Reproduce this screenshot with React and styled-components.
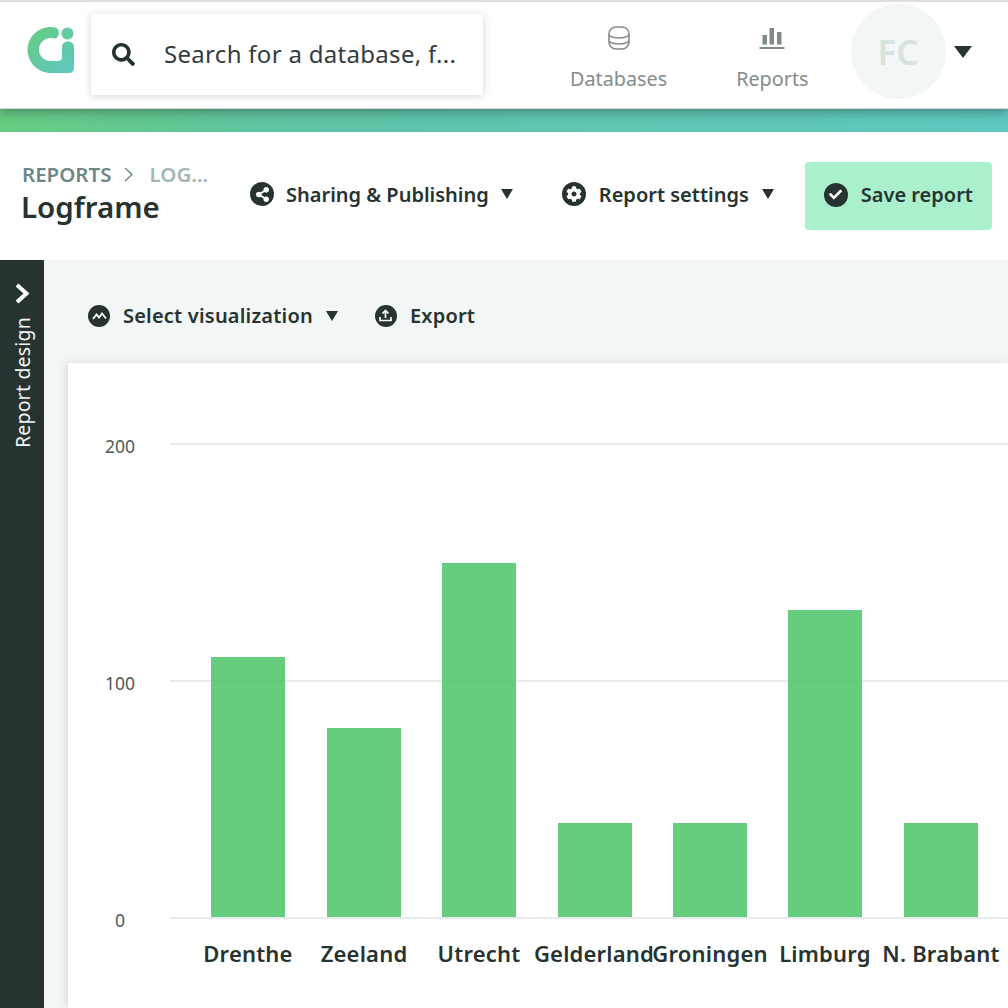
import React from 'react';
import styled, { createGlobalStyle } from 'styled-components';
import { FaCheck, FaCog, FaSearch, FaShareAlt } from 'react-icons/fa';

const GlobalStyle = createGlobalStyle`
  html, body {
    margin: 0;
    padding: 0;
    height: 100%;
    overflow: hidden;
    background: white;
    font-family: "Noto Sans", "Open Sans", sans-serif;
    color: #263331;
  }
`;

const Page = styled.div`
  width: 1008px;
  height: 1008px;
  display: flex;
  flex-direction: column;
  overflow: hidden;
`;

const TopNav = styled.header`
  position: relative;
  z-index: 2;
  height: 106px;
  flex-shrink: 0;
  border-top: 2px solid #dcdcdc;
  background: white;
  display: flex;
  align-items: flex-start;
  box-shadow: 0 1px 0 #d5d8d8, 0 4px 10px rgba(38, 51, 49, 0.45);
`;

const LogoSlot = styled.div`
  width: 91px;
  height: 100%;
  padding: 24px 0 0 27px;
  box-sizing: border-box;
  flex-shrink: 0;
`;

const SearchBox = styled.div`
  width: 392px;
  height: 81px;
  margin-top: 12px;
  flex-shrink: 0;
  display: flex;
  align-items: center;
  gap: 29px;
  padding-left: 21px;
  box-sizing: border-box;
  background: white;
  box-shadow: 0 1px 8px rgba(38, 51, 49, 0.2);
  font-size: 24px;
  letter-spacing: 0.3px;
  color: #323c42;
  white-space: nowrap;
  svg {
    color: #263331;
    font-size: 23px;
    flex-shrink: 0;
  }
  span {
    position: relative;
    top: -1px;
  }
`;

const NavLinks = styled.nav`
  display: flex;
  margin-left: 87px;
  gap: 69px;
`;

const NavLink = styled.a`
  display: flex;
  flex-direction: column;
  align-items: center;
  padding-top: 21px;
  font-size: 19.8px;
  line-height: 26px;
  color: #858b8b;
`;

const NavIcon = styled.span`
  height: 29px;
  margin-bottom: 14px;
  display: flex;
  align-items: center;
`;

const UserArea = styled.div`
  display: flex;
  align-items: center;
  margin-left: 42px;
  margin-top: 2px;
  gap: 8px;
`;

const Avatar = styled.div`
  width: 95px;
  height: 95px;
  border-radius: 50%;
  background: #f3f6f6;
  color: #d5e4dd;
  font-size: 35px;
  font-weight: 600;
  display: flex;
  align-items: center;
  justify-content: center;
`;

const Caret = styled.span`
  display: inline-block;
  flex-shrink: 0;
  border-left: ${(p) => p.$size}px solid transparent;
  border-right: ${(p) => p.$size}px solid transparent;
  border-top: ${(p) => p.$tall}px solid #263331;
`;

const BrandBar = styled.div`
  height: 24px;
  flex-shrink: 0;
  background: linear-gradient(90deg, #66cc80 0%, #5fc4a6 30%, #5fc8c0 100%);
`;

const ReportHeader = styled.div`
  height: 128px;
  flex-shrink: 0;
  display: flex;
  align-items: center;
  background: white;
`;

const TitleBlock = styled.div`
  width: 250px;
  padding-left: 21px;
  box-sizing: border-box;
  flex-shrink: 0;
  margin-top: -4px;
`;

const Breadcrumbs = styled.div`
  display: flex;
  align-items: center;
  gap: 13px;
  padding-left: 1px;
  font-size: 20.5px;
  line-height: 24px;
  font-weight: 600;
  color: #6f8886;
  white-space: nowrap;
  svg {
    flex-shrink: 0;
  }
`;

const CrumbCurrent = styled.span`
  margin-left: 3px;
  color: #a3b6b6;
`;

const Title = styled.h1`
  margin: 2px 0 0;
  font-size: 29.5px;
  line-height: 38px;
  font-weight: 600;
  color: #263331;
`;

const ActionButton = styled.button`
  display: flex;
  align-items: center;
  gap: ${(p) => p.$gap || 12}px;
  padding: 0;
  margin-top: -4px;
  margin-right: ${(p) => p.$after || 0}px;
  border: 0;
  background: none;
  font-family: inherit;
  font-size: 20px;
  letter-spacing: ${(p) => p.$track || 0}px;
  font-weight: 600;
  color: #263331;
  white-space: nowrap;
`;

const SaveButton = styled(ActionButton)`
  width: 187px;
  height: 68px;
  margin-top: 0;
  padding-bottom: 3px;
  justify-content: center;
  border-radius: 4px;
  background: #abf0cc;
`;

const IconDisc = styled.span`
  width: ${(p) => p.$d || 24}px;
  height: ${(p) => p.$d || 24}px;
  border-radius: 50%;
  background: #263331;
  color: white;
  display: flex;
  align-items: center;
  justify-content: center;
  font-size: ${(p) => p.$glyph || 13}px;
  flex-shrink: 0;
`;

const Workspace = styled.div`
  flex: 1;
  display: flex;
  min-height: 0;
`;

const DesignRail = styled.aside`
  width: 44px;
  flex-shrink: 0;
  background: #263331;
  color: white;
  display: flex;
  flex-direction: column;
  align-items: center;
  padding-top: 23px;
  gap: 13px;
`;

const RailLabel = styled.span`
  writing-mode: vertical-rl;
  transform: rotate(180deg);
  font-size: 19.5px;
  line-height: 24px;
  letter-spacing: 0.2px;
  white-space: nowrap;
  color: #f3f6f6;
  margin-left: 2px;
`;

const Content = styled.main`
  flex: 1;
  min-width: 0;
  background: #f3f6f6;
  padding-left: 24px;
  display: flex;
  flex-direction: column;
`;

const Toolbar = styled.div`
  height: 103px;
  flex-shrink: 0;
  padding: 12px 0 0 20px;
  box-sizing: border-box;
  display: flex;
  align-items: center;
`;

const ChartCard = styled.section`
  flex: 1;
  background: white;
  box-shadow: -2px 0 8px rgba(38, 51, 49, 0.15);
`;

const ChartSvg = styled.svg`
  display: block;
  width: 940px;
  height: 645px;
`;

const AxisText = styled.text`
  font-size: 17.5px;
  fill: #4d5958;
  text-anchor: middle;
`;

const CategoryText = styled.text`
  font-size: 22px;
  letter-spacing: 0.2px;
  font-weight: 600;
  fill: #263331;
  text-anchor: middle;
`;

const GridLine = styled.line`
  stroke: #e8ebeb;
  stroke-width: 2;
`;

const Bar = styled.rect`
  fill: #4fc46b;
  fill-opacity: 0.87;
`;

const bars = [
  { label: 'Drenthe', x: 143, top: 294, cx: 180 },
  { label: 'Zeeland', x: 259, top: 365, cx: 296 },
  { label: 'Utrecht', x: 374, top: 200, cx: 411 },
  { label: 'Gelderland', x: 490, top: 460, cx: 526 },
  { label: 'Groningen', x: 605, top: 460, cx: 642 },
  { label: 'Limburg', x: 720, top: 247, cx: 757 },
  { label: 'N. Brabant', x: 836, top: 460, cx: 873 },
];

const ticks = [
  { value: 200, y: 81 },
  { value: 100, y: 318 },
  { value: 0, y: 555 },
];

const Logo = () => (
  <svg width="48" height="48" viewBox="0 0 48 48">
    <defs>
      <linearGradient id="logoFill" x1="0" y1="0" x2="1" y2="1">
        <stop offset="0%" stopColor="#66cc80" />
        <stop offset="100%" stopColor="#5fc8c4" />
      </linearGradient>
    </defs>
    <path
      d="M24 1 C25.5 1 27 1.2 28.5 1.6 C33 3 33 11 28.5 12.6 C27 12.2 25.5 12 24 12 C17 12 12 17 12 24 C12 30 17 35 24 35 L31 35 C33.5 35 35 33 35 31 L35 21 C35 17.5 37.5 15.5 41 15.5 C44.5 15.5 47 17.5 47 21 L47 42 C47 45 45 47 42 47 L24 47 C11 47 0.5 36.5 0.5 24 C0.5 11 11 1 24 1 Z"
      fill="url(#logoFill)"
    />
    <circle cx="40.5" cy="7.5" r="6" fill="#64cba0" />
  </svg>
);

const DatabaseIcon = () => (
  <svg width="22" height="24" viewBox="0 0 22 24" fill="none" stroke="#858b8b" strokeWidth="1.6">
    <rect x="1" y="1" width="20" height="22" rx="7" />
    <path d="M1 9 C5 13 17 13 21 9" />
    <path d="M1 15 C5 19 17 19 21 15" />
  </svg>
);

const ReportsIcon = () => (
  <svg width="26" height="26" viewBox="0 0 26 26" fill="#7f8a89">
    <rect x="3.5" y="10" width="4.5" height="9.5" />
    <rect x="10.5" y="3" width="4.5" height="16.5" />
    <rect x="18" y="7" width="4.5" height="12.5" />
    <rect x="0.5" y="22" width="25" height="2" />
  </svg>
);

const Chevron = () => (
  <svg width="9" height="15" viewBox="0 0 9 15" fill="none" stroke="#6f8886" strokeWidth="1.5">
    <path d="M1 1 L8 7.5 L1 14" />
  </svg>
);

const RailChevron = () => (
  <svg width="15" height="21" viewBox="0 0 15 21" fill="none" stroke="white" strokeWidth="4">
    <path d="M2 2 L11.5 10.5 L2 19" />
  </svg>
);

const TrendIcon = () => (
  <svg width="15" height="10" viewBox="0 0 15 10" fill="none" stroke="white" strokeWidth="1.8">
    <path d="M1 8 L4.5 3.5 L7 6.5 L10 2.5 L14 7.5" />
  </svg>
);

const UploadIcon = () => (
  <svg width="13" height="13" viewBox="0 0 13 13" fill="none" stroke="white" strokeWidth="1.7">
    <path d="M6.5 9 L6.5 2 M3.5 4.5 L6.5 1.5 L9.5 4.5" />
    <path d="M1 8 L1 11.5 L12 11.5 L12 8" />
  </svg>
);

const App = () => (
  <Page>
    <GlobalStyle />
    <TopNav>
      <LogoSlot>
        <Logo />
      </LogoSlot>
      <SearchBox>
        <FaSearch />
        <span>Search for a database, f...</span>
      </SearchBox>
      <NavLinks>
        <NavLink>
          <NavIcon>
            <DatabaseIcon />
          </NavIcon>
          Databases
        </NavLink>
        <NavLink>
          <NavIcon>
            <ReportsIcon />
          </NavIcon>
          Reports
        </NavLink>
      </NavLinks>
      <UserArea>
        <Avatar>FC</Avatar>
        <Caret $size={9} $tall={12} />
      </UserArea>
    </TopNav>
    <BrandBar />
    <ReportHeader>
      <TitleBlock>
        <Breadcrumbs>
          <span>REPORTS</span>
          <Chevron />
          <CrumbCurrent>LOG...</CrumbCurrent>
        </Breadcrumbs>
        <Title>Logframe</Title>
      </TitleBlock>
      <ActionButton $after={49}>
        <IconDisc $glyph={15}>
          <FaShareAlt />
        </IconDisc>
        Sharing &amp; Publishing
        <Caret $size={6} $tall={10} />
      </ActionButton>
      <ActionButton $after={31} $gap={13}>
        <IconDisc $glyph={16}>
          <FaCog />
        </IconDisc>
        Report settings
        <Caret $size={6} $tall={10} />
      </ActionButton>
      <SaveButton $gap={13}>
        <IconDisc>
          <FaCheck />
        </IconDisc>
        Save report
      </SaveButton>
    </ReportHeader>
    <Workspace>
      <DesignRail>
        <RailChevron />
        <RailLabel>Report design</RailLabel>
      </DesignRail>
      <Content>
        <Toolbar>
          <ActionButton $after={37} $gap={13} $track={0.2}>
            <IconDisc $d={22}>
              <TrendIcon />
            </IconDisc>
            Select visualization
            <Caret $size={6} $tall={10} />
          </ActionButton>
          <ActionButton $gap={13} $track={0.2}>
            <IconDisc $d={22}>
              <UploadIcon />
            </IconDisc>
            Export
          </ActionButton>
        </Toolbar>
        <ChartCard>
          <ChartSvg viewBox="0 0 940 645">
            {ticks.map((t) => (
              <g key={t.value}>
                <GridLine x1="102" x2="940" y1={t.y} y2={t.y} />
                <AxisText x="52" y={t.y + 9}>
                  {t.value}
                </AxisText>
              </g>
            ))}
            {bars.map((b) => (
              <g key={b.label}>
                <Bar x={b.x} y={b.top} width="74" height={554 - b.top} />
                <CategoryText x={b.cx} y="599">
                  {b.label}
                </CategoryText>
              </g>
            ))}
          </ChartSvg>
        </ChartCard>
      </Content>
    </Workspace>
  </Page>
);

export default App;
